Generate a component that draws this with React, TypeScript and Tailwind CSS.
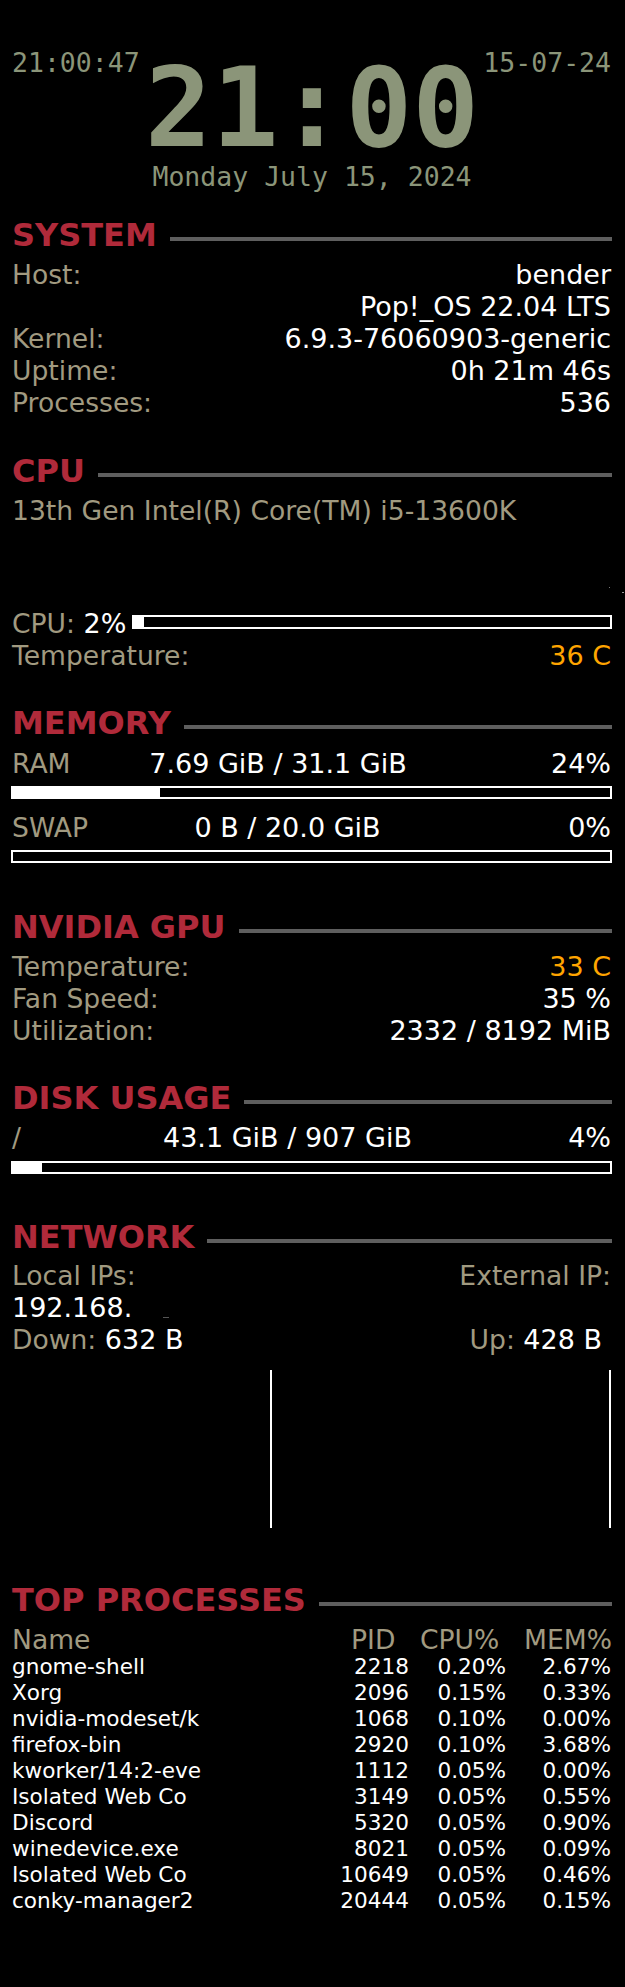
import React from 'react';

const Title = ({ children }: { children: React.ReactNode }) => (
  <div className="flex h-[32px] items-start">
    <span className="whitespace-nowrap text-[32px] font-bold leading-[28px] text-[#b02a3a]">{children}</span>
    <div className="ml-[13px] mt-[16px] h-[4px] flex-1 bg-[#5e5e5e]" />
  </div>
);

const Row = ({ label, value, valueClass = 'text-white' }: { label: string; value: string; valueClass?: string }) => (
  <div className="flex h-[32px] justify-between whitespace-nowrap pr-[1px]">
    <span className="text-[26.6px] text-[#a19a80]">{label}</span>
    <span className={valueClass}>{value}</span>
  </div>
);

// label / centered amount / percent, like conky's alignc
const UsageRow = ({ label, amount, pct, right = 'w-[48px]' }: { label: string; amount: string; pct: string; right?: string }) => (
  <div className="flex h-[32px] whitespace-nowrap pr-[1px]">
    <span className="w-0 text-[26.6px] text-[#a19a80]">{label}</span>
    <span className="flex-1 text-center text-white">{amount}</span>
    <span className={`flex justify-end text-white ${right}`}>{pct}</span>
  </div>
);

const Bar = ({ pct, className = '' }: { pct: number; className?: string }) => (
  <div className={`border-2 border-white ${className}`}>
    <div className="h-full bg-white" style={{ width: `${pct}%` }} />
  </div>
);

const procs = [
  ['gnome-shell', '2218', '0.20%', '2.67%'],
  ['Xorg', '2096', '0.15%', '0.33%'],
  ['nvidia-modeset/k', '1068', '0.10%', '0.00%'],
  ['firefox-bin', '2920', '0.10%', '3.68%'],
  ['kworker/14:2-eve', '1112', '0.05%', '0.00%'],
  ['Isolated Web Co', '3149', '0.05%', '0.55%'],
  ['Discord', '5320', '0.05%', '0.90%'],
  ['winedevice.exe', '8021', '0.05%', '0.09%'],
  ['Isolated Web Co', '10649', '0.05%', '0.46%'],
  ['conky-manager2', '20444', '0.05%', '0.15%'],
];

export default function App() {
  return (
    <div className="min-h-[1987px] w-[625px] bg-black pt-[47px] font-['DejaVu_Sans',sans-serif] text-[27px] leading-[29px]">
      <div className="ml-[12px] w-[600px]">
        {/* clock */}
        <div className="flex h-[32px] justify-between pr-[1px] font-['DejaVu_Sans_Mono',monospace] text-[26.5px] leading-[32px] text-[#8b9579]">
          <span>21:00:47</span>
          <span>15-07-24</span>
        </div>
        <div className="-mt-[27px] h-[111px] text-center font-['DejaVu_Sans_Mono',monospace] text-[111px] font-bold leading-[111px] text-[#8b9579]">
          21:00
        </div>
        <div className="-mt-[2px] h-[32px] text-center font-['DejaVu_Sans_Mono',monospace] text-[26.5px] leading-[32px] text-[#8b9579]">
          Monday July 15, 2024
        </div>

        {/* system */}
        <div className="mt-[28px]">
          <Title>SYSTEM</Title>
        </div>
        <div className="mt-[7px]">
          <Row label="Host:" value="bender" />
          <Row label="" value="Pop!_OS 22.04 LTS" />
          <Row label="Kernel:" value="6.9.3-76060903-generic" />
          <Row label="Uptime:" value="0h 21m 46s" />
          <Row label="Processes:" value="536" />
        </div>

        {/* cpu */}
        <div className="mt-[37px]">
          <Title>CPU</Title>
        </div>
        <div className="mt-[7px] h-[32px] whitespace-nowrap text-[26.6px] text-[#a19a80]">13th Gen Intel(R) Core(TM) i5-13600K</div>
        <div className="relative h-[81px]">
          <div className="absolute left-[597px] top-[59px] h-px w-px bg-[#777]" />
          <div className="absolute left-[610px] top-[64px] h-px w-[2px] bg-[#999]" />
        </div>
        <div className="flex h-[32px] items-start whitespace-nowrap">
          <span className="text-[26.6px] text-[#a19a80]">
            CPU: <span className="text-[27px] text-white">2%</span>
          </span>
          <div className="ml-[6px] mt-[6px] h-[14px] flex-1 border-2 border-white">
            <div className="h-full bg-white" style={{ width: '2%' }} />
          </div>
        </div>
        <Row label="Temperature:" value="36 C" valueClass="text-[#ffa500]" />

        {/* memory */}
        <div className="mt-[36px]">
          <Title>MEMORY</Title>
        </div>
        <div className="mt-[8px]">
          <UsageRow label="RAM" amount="7.69 GiB / 31.1 GiB" pct="24%" right="w-[67px]" />
        </div>
        <Bar pct={24.6} className="-ml-[1px] mt-[5px] h-[13px] w-[601px]" />
        <div className="mt-[14px]">
          <UsageRow label="SWAP" amount="0 B / 20.0 GiB" pct="0%" />
        </div>
        <Bar pct={0} className="-ml-[1px] mt-[5px] h-[13px] w-[601px]" />

        {/* gpu */}
        <div className="mt-[50px]">
          <Title>NVIDIA GPU</Title>
        </div>
        <div className="mt-[7px]">
          <Row label="Temperature:" value="33 C" valueClass="text-[#ffa500]" />
          <Row label="Fan Speed:" value="35 %" />
          <Row label="Utilization:" value="2332 / 8192 MiB" />
        </div>

        {/* disk */}
        <div className="mt-[36px]">
          <Title>DISK USAGE</Title>
        </div>
        <div className="mt-[7px]">
          <UsageRow label="/" amount="43.1 GiB / 907 GiB" pct="4%" />
        </div>
        <Bar pct={4.8} className="-ml-[1px] mt-[6px] h-[13px] w-[601px]" />

        {/* network */}
        <div className="mt-[49px]">
          <Title>NETWORK</Title>
        </div>
        <div className="mt-[6px]">
          <div className="flex h-[32px] justify-between whitespace-nowrap pr-[1px] text-[26.6px] text-[#a19a80]">
            <span>Local IPs:</span>
            <span>External IP:</span>
          </div>
          <div className="flex h-[32px] items-start text-white">
            <span>192.168.</span>
            <span className="ml-[31px] mt-[24px] h-px w-[6px] bg-[#555]" />
          </div>
          <div className="flex h-[32px] justify-between whitespace-nowrap pr-[10px]">
            <span className="text-[26.6px] text-[#a19a80]">
              Down: <span className="text-[27px] text-white">632 B</span>
            </span>
            <span className="text-[26.6px] text-[#a19a80]">
              Up: <span className="text-[27px] text-white">428 B</span>
            </span>
          </div>
        </div>
        <div className="mt-[13px] flex h-[158px] justify-between">
          <div className="w-[260px] border-r-2 border-white" />
          <div className="mr-[1px] w-[200px] border-r-2 border-white" />
        </div>

        {/* processes */}
        <div className="mt-[58px]">
          <Title>TOP PROCESSES</Title>
        </div>
        <div className="mt-[7px] flex h-[29px] whitespace-nowrap text-[26.6px] text-[#a19a80]">
          <span className="w-[339px]">Name</span>
          <span className="w-[69px]">PID</span>
          <span className="w-[104px]">CPU%</span>
          <span>MEM%</span>
        </div>
        <div className="text-[21.6px] leading-[26px] text-white">
          {procs.map((p, i) => (
            <div key={i} className="flex h-[26px] whitespace-nowrap">
              <span className="w-[302px]">{p[0]}</span>
              <span className="w-[95px] text-right">{p[1]}</span>
              <span className="w-[97px] text-right">{p[2]}</span>
              <span className="w-[105px] text-right">{p[3]}</span>
            </div>
          ))}
        </div>
      </div>
    </div>
  );
}
